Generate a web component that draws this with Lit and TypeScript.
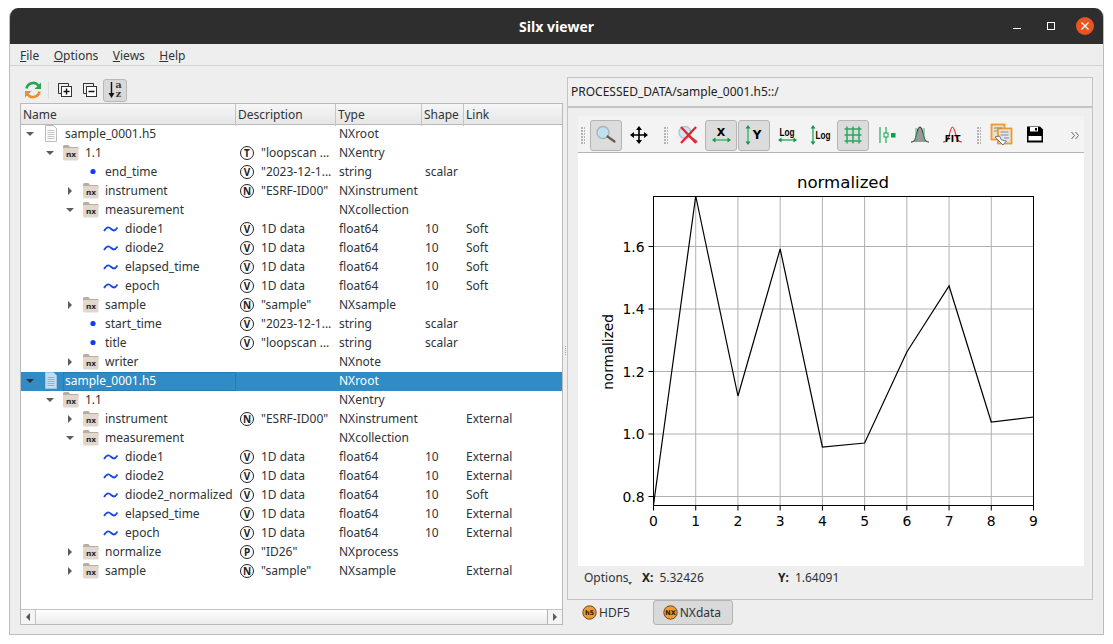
import { LitElement, html, svg, css } from 'lit';
import { customElement } from 'lit/decorators.js';
import { classMap } from 'lit/directives/class-map.js';

type Row = {
  d: number;
  kind: 'file' | 'nx' | 'dot' | 'wave';
  open?: boolean;
  name: string;
  badge?: string;
  desc?: string;
  type?: string;
  shape?: string;
  link?: string;
  sel?: boolean;
};

const ROWS: Row[] = [
  { d: 0, kind: 'file', open: true, name: 'sample_0001.h5', type: 'NXroot' },
  { d: 1, kind: 'nx', open: true, name: '1.1', badge: 'T', desc: '"loopscan ...', type: 'NXentry' },
  { d: 2, kind: 'dot', name: 'end_time', badge: 'V', desc: '"2023-12-1...', type: 'string', shape: 'scalar' },
  { d: 2, kind: 'nx', open: false, name: 'instrument', badge: 'N', desc: '"ESRF-ID00"', type: 'NXinstrument' },
  { d: 2, kind: 'nx', open: true, name: 'measurement', type: 'NXcollection' },
  { d: 3, kind: 'wave', name: 'diode1', badge: 'V', desc: '1D data', type: 'float64', shape: '10', link: 'Soft' },
  { d: 3, kind: 'wave', name: 'diode2', badge: 'V', desc: '1D data', type: 'float64', shape: '10', link: 'Soft' },
  { d: 3, kind: 'wave', name: 'elapsed_time', badge: 'V', desc: '1D data', type: 'float64', shape: '10', link: 'Soft' },
  { d: 3, kind: 'wave', name: 'epoch', badge: 'V', desc: '1D data', type: 'float64', shape: '10', link: 'Soft' },
  { d: 2, kind: 'nx', open: false, name: 'sample', badge: 'N', desc: '"sample"', type: 'NXsample' },
  { d: 2, kind: 'dot', name: 'start_time', badge: 'V', desc: '"2023-12-1...', type: 'string', shape: 'scalar' },
  { d: 2, kind: 'dot', name: 'title', badge: 'V', desc: '"loopscan ...', type: 'string', shape: 'scalar' },
  { d: 2, kind: 'nx', open: false, name: 'writer', type: 'NXnote' },
  { d: 0, kind: 'file', open: true, name: 'sample_0001.h5', type: 'NXroot', sel: true },
  { d: 1, kind: 'nx', open: true, name: '1.1', type: 'NXentry' },
  { d: 2, kind: 'nx', open: false, name: 'instrument', badge: 'N', desc: '"ESRF-ID00"', type: 'NXinstrument', link: 'External' },
  { d: 2, kind: 'nx', open: true, name: 'measurement', type: 'NXcollection' },
  { d: 3, kind: 'wave', name: 'diode1', badge: 'V', desc: '1D data', type: 'float64', shape: '10', link: 'External' },
  { d: 3, kind: 'wave', name: 'diode2', badge: 'V', desc: '1D data', type: 'float64', shape: '10', link: 'External' },
  { d: 3, kind: 'wave', name: 'diode2_normalized', badge: 'V', desc: '1D data', type: 'float64', shape: '10', link: 'Soft' },
  { d: 3, kind: 'wave', name: 'elapsed_time', badge: 'V', desc: '1D data', type: 'float64', shape: '10', link: 'External' },
  { d: 3, kind: 'wave', name: 'epoch', badge: 'V', desc: '1D data', type: 'float64', shape: '10', link: 'External' },
  { d: 2, kind: 'nx', open: false, name: 'normalize', badge: 'P', desc: '"ID26"', type: 'NXprocess' },
  { d: 2, kind: 'nx', open: false, name: 'sample', badge: 'N', desc: '"sample"', type: 'NXsample', link: 'External' },
];

const fileIcon = (sel: boolean) => html`<svg width="16" height="17" viewBox="0 0 16 17">
  <path d="M2.500 .5h8l3 3v13h-11z" fill=${sel ? '#c4dcec' : '#fbfbfb'} stroke=${sel ? '#9cc4de' : '#bdbdbd'} />
  <path d="M4.500 5.500h7M4.500 7.500h7M4.500 9.500h7M4.500 11.500h7M4.500 13.500h7" stroke=${sel ? '#8ab6d4' : '#c6c6c6'} />
</svg>`;

const nxIcon = html`<svg width="16" height="17" viewBox="0 0 16 17">
  <path d="M0 2.500q0-1.500 1.500-1.500h4l1.500 2h7.500q1 0 1 1v2h-15.500z" fill="#b9ada1" />
  <path d="M0 4h15.500v11q0 1.500-1.500 1.500h-12.500q-1.500 0-1.500-1.500z" fill="#e1d7cd" />
  <text x="8" y="13" text-anchor="middle" font-family="'DejaVu Sans',sans-serif" font-weight="700" font-size="7.500" fill="#2a2a2a">nx</text>
</svg>`;

const dotIcon = html`<svg width="16" height="17" viewBox="0 0 16 17"><circle cx="10" cy="8.500" r="2.600" fill="#0f3cf0" /></svg>`;

const waveIcon = html`<svg width="16" height="17" viewBox="0 0 16 17">
  <path d="M1 11c2-3 3.500-4 5-3.500s3 3 5 3c1.500 0 2.500-1.500 3.500-3" fill="none" stroke="#1a48e0" stroke-width="1.800" />
</svg>`;

const grnArrowH = svg`<path d="M5 17h15" stroke="#6cc08a" stroke-width="2" /><path d="M3 17l3.500-2.500v5zM22 17l-3.500-2.500v5z" fill="#0a9a4a" />`;
const grnArrowV = (x: number) => svg`<path d="M${x} 4v15" stroke="#6cc08a" stroke-width="2" /><path d="M${x} 2l-2.500 3.500h5zM${x} 22l-2.500-3.500h5z" fill="#0a9a4a" />`;
const lens = svg`<circle cx="9" cy="9.500" r="6" fill="#bfe2f3" stroke="#a9b4bb" stroke-width="1.400" /><path d="M13.500 13.500l7 5" stroke="#6b5a50" stroke-width="2.200" stroke-linecap="round" />`;
const ic = (body: unknown) => html`<svg width="24" height="24" viewBox="0 0 24 24">${body}</svg>`;
const boldText = (x: number, y: number, t: string, size: number) =>
  svg`<text x=${x} y=${y} text-anchor="middle" font-family="'DejaVu Sans',sans-serif" font-weight="700" font-size=${size} fill="#000">${t}</text>`;
// the icon's "Log" is a condensed face, squeezed here so it stays inside its button
const logText = (x: number, y: number) =>
  svg`<text transform="translate(${x} ${y}) scale(.78 1)" text-anchor="middle" font-family="'Liberation Sans',sans-serif" font-weight="700" font-size="10.500" fill="#000">Log</text>`;

const ICONS = {
  zoom: ic(lens),
  pan: ic(svg`<path d="M12 5v14M5 12h14" stroke="#000" stroke-width="1.600" /><path d="M12 3l-3 4h6zM12 21l-3-4h6zM3 12l4-3v6zM21 12l-4-3v6z" fill="#000" />`),
  reset: ic(svg`<g opacity=".75">${lens}</g><path d="M5 4l15 16M20 4L5 20" stroke="#e8212e" stroke-width="2.200" />`),
  x: ic(svg`${boldText(12, 13, 'X', 11)}${grnArrowH}`),
  y: ic(svg`${grnArrowV(6)}${boldText(15, 16, 'Y', 12)}`),
  logx: ic(svg`${logText(12, 13)}${grnArrowH}`),
  logy: ic(svg`${grnArrowV(5)}${logText(15, 16)}`),
  grid: ic(svg`<path d="M6 3.500v17M12 3.500v17M18 3.500v17M3.500 6h17M3.500 12h17M3.500 18h17" stroke="#2aa860" stroke-width="1.500" />`),
  style: ic(svg`<path d="M6 4v16M12 4v16" stroke="#4cba7a" stroke-width="1.500" /><rect x="10" y="10" width="4" height="4" fill="#fff" stroke="#12a050" /><rect x="17" y="10" width="4.500" height="4.500" fill="#0fa04c" />`),
  gauss: ic(svg`<path d="M4 19c3 0 4-2 5-6s2-9 4-9 3 6 4 10 3 5 5 5z" fill="#999" /><path d="M4 19c3 0 4-2 5-6s2-9 4-9 3 6 4 10 3 5 5 5" fill="none" stroke="#222" /><path d="M9 5v14M17 5v14" stroke="#3fb573" />`),
  fit: ic(svg`<path d="M3 19c3 0 5-2 6-6s2-9 3.500-9 3 6 4 10 3 5 5.500 5" fill="none" stroke="#e8323c" stroke-width="1.200" />${boldText(12.500, 19, 'FIT', 9)}`),
  copy: ic(svg`<rect x="2.500" y="1.500" width="13" height="15" fill="#eadfc9" stroke="#f09a28" stroke-width="1.800" /><rect x="9" y="5.500" width="13.500" height="15" fill="#e5e5e5" stroke="#f09a28" stroke-width="1.800" /><path d="M5 5h8M5 8h3M11.500 9h8M11.500 12h8M15 15h5" stroke="#8a8a8a" stroke-width="1.200" /><path d="M6 14l8 8 3.500-4-5-1-2-4z" fill="#fff" stroke="#555" stroke-width=".8" />`),
  save: ic(svg`<path d="M5 3.500h13l3 3v13H5z" fill="#000" /><rect x="8" y="4" width="8" height="4.500" fill="#fff" /><rect x="13" y="5" width="2" height="2.500" fill="#000" /><rect x="6.500" y="13" width="13" height="4.500" fill="#fff" />`),
};

const refreshIcon = html`<svg width="18" height="18" viewBox="0 0 18 18">
  <path d="M2.500 7.500A6.800 6.800 0 0 1 14.500 4.500" fill="none" stroke="#27a74b" stroke-width="2.600" />
  <path d="M17 1.500v6.500h-6.500z" fill="#27a74b" />
  <path d="M15.500 10.500A6.800 6.800 0 0 1 3.500 13.500" fill="none" stroke="#f28c28" stroke-width="2.600" />
  <path d="M1 16.500V10h6.500z" fill="#f28c28" />
</svg>`;
const expandIcon = html`<svg width="14" height="14" viewBox="0 0 14 14">
  <path d="M3 .5H.5v10H3M.5 .5h10V3" fill="none" stroke="#333" />
  <rect x="3.500" y="3.500" width="10" height="10" fill="#fff" stroke="#333" />
  <path d="M5.500 8.500h6M8.500 5.500v6" stroke="#111" stroke-width="1.400" />
</svg>`;
const collapseIcon = html`<svg width="14" height="14" viewBox="0 0 14 14">
  <path d="M3 .5H.5v10H3M.5 .5h10V3" fill="none" stroke="#333" />
  <rect x="3.500" y="3.500" width="10" height="10" fill="#fff" stroke="#333" />
  <path d="M5.500 8.500h6" stroke="#111" stroke-width="1.400" />
</svg>`;
const sortIcon = html`<svg width="18" height="20" viewBox="0 0 18 20">
  <path d="M5.500 2v13" stroke="#111" stroke-width="1.400" /><path d="M5.500 18l-3-5h6z" fill="#111" />
  <text x="12.500" y="8" text-anchor="middle" font-family="'DejaVu Serif',serif" font-weight="700" font-size="9.500" fill="#333">a</text>
  <text x="12.500" y="17" text-anchor="middle" font-family="'DejaVu Serif',serif" font-weight="700" font-size="9.500" fill="#333">z</text>
</svg>`;

const orangeBall = (t: string) => html`<svg width="15" height="15" viewBox="0 0 15 15">
  <circle cx="7.500" cy="7.500" r="6.700" fill="#f59a2b" stroke="#6b4a22" />
  <text x="7.500" y="10" text-anchor="middle" font-family="'DejaVu Sans',sans-serif" font-weight="700" font-size="6.500" fill="#241a0c">${t}</text>
</svg>`;

// plot mapping, in window pixels (viewBox of the svg is the same)
const AX = { l: 653.5, r: 1033.5, t: 196.5, b: 505.5 };
const xp = (v: number) => AX.l + (v * (AX.r - AX.l)) / 9;
const yp = (v: number) => 496.5 - ((v - 0.8) * 250) / 0.8;
const LINE = [505, 196, 396, 249, 447, 443, 352, 286, 422, 417];
const XT = [0, 1, 2, 3, 4, 5, 6, 7, 8, 9];
const YT = [0.8, 1.0, 1.2, 1.4, 1.6];

@customElement('app-root')
export class AppRoot extends LitElement {
  static styles = css`
    :host {
      display: block;
      padding: 8px 9px;
      background: #fff;
      font-family: 'Noto Sans', sans-serif;
      font-size: 12px;
      color: #2e3436;
    }
    .win {
      width: 1095px;
      height: 627px;
      box-sizing: border-box;
      border: 1px solid #bcbcbc;
      border-top: 0;
      border-radius: 9px 9px 0 0;
      background: #eeeeee;
      display: flex;
      flex-direction: column;
      overflow: hidden;
    }
    .title {
      height: 36px;
      flex: none;
      margin: 0 -1px;
      background: #2f2e2e;
      color: #fff;
      font-family: 'Open Sans', sans-serif;
      font-weight: 700;
      font-size: 14px;
      display: flex;
      align-items: center;
      justify-content: center;
      position: relative;
    }
    .wm {
      position: absolute;
      right: 10px;
      top: 0;
      height: 36px;
      display: flex;
      align-items: center;
      gap: 16px;
    }
    .menu {
      height: 22px;
      flex: none;
      box-sizing: border-box;
      border-bottom: 1px solid #d2d2d2;
      display: flex;
      align-items: center;
      gap: 14.500px;
      padding: 1px 0 0 10px;
    }
    .main {
      flex: 1;
      display: flex;
      padding: 11px 10px 9px 10px;
      min-height: 0;
    }
    .left {
      width: 543px;
      flex: none;
      display: flex;
      flex-direction: column;
    }
    .tools {
      height: 26px;
      flex: none;
      display: flex;
      align-items: center;
      box-sizing: border-box;
    }
    .tbtn {
      width: 24px;
      height: 23px;
      flex: none;
      box-sizing: border-box;
      display: flex;
      align-items: center;
      justify-content: center;
      border: 1px solid transparent;
      border-radius: 3px;
      margin-right: 1px;
    }
    .tbtn.first {
      padding-left: 2px;
    }
    .tbtn.on {
      background: #d9d9d9;
      border-color: #b8b8b8;
    }
    .sep {
      width: 1px;
      height: 18px;
      background: #dcdcdc;
      margin: 0 4px 0 3px;
    }
    .tree {
      flex: 1;
      border: 1px solid #b9b9b9;
      background: #fff;
      display: flex;
      flex-direction: column;
      min-height: 0;
    }
    .hdr,
    .row {
      display: grid;
      grid-template-columns: 215px 100px 86px 42px 1fr;
    }
    .hdr {
      height: 21px;
      flex: none;
      box-sizing: border-box;
      border-bottom: 1px solid #b9b9b9;
      background: linear-gradient(#f6f6f6, #e6e6e6);
    }
    .hdr > div {
      padding-left: 2px;
      line-height: 22px;
      box-sizing: border-box;
      border-right: 1px solid #c4c4c4;
    }
    .hdr > div:last-child {
      border-right: 0;
    }
    .rows {
      flex: 1;
      min-height: 0;
      overflow: hidden;
    }
    .row {
      height: 19px;
      line-height: 17px;
    }
    .row.sel {
      background: #308cc6;
      color: #fff;
    }
    .namec {
      height: 19px;
      box-sizing: border-box;
      padding-bottom: 2px;
      display: flex;
      align-items: center;
      min-width: 0;
    }
    .arrow {
      width: 18px;
      flex: none;
      display: flex;
      justify-content: center;
      align-items: center;
    }
    .down {
      width: 0;
      height: 0;
      border-left: 4px solid transparent;
      border-right: 4px solid transparent;
      border-top: 4px solid #5c5c5c;
    }
    .right {
      width: 0;
      height: 0;
      border-top: 4px solid transparent;
      border-bottom: 4px solid transparent;
      border-left: 4px solid #5c5c5c;
    }
    .row.sel .down {
      border-top-color: #24323c;
    }
    .ico {
      width: 16px;
      height: 17px;
      flex: none;
      margin-left: 4px;
    }
    .ico svg {
      display: block;
    }
    .lab {
      flex: 1;
      align-self: flex-start;
      padding-left: 2px;
      margin-left: 4px;
      height: 19px;
      white-space: nowrap;
    }
    .row.sel .lab {
      outline: 1px solid #2a7bae;
      outline-offset: -1px;
    }
    .descc {
      height: 19px;
      box-sizing: border-box;
      padding: 0 0 2px 4px;
      display: flex;
      align-items: center;
      gap: 7px;
      white-space: nowrap;
    }
    .badge {
      width: 12px;
      height: 12px;
      border: 1px solid #222;
      border-radius: 50%;
      display: flex;
      align-items: center;
      justify-content: center;
      font-size: 10px;
      font-weight: 700;
      color: #222;
      line-height: 1;
    }
    .typec {
      padding-left: 3px;
    }
    .linkc {
      padding-left: 2px;
    }
    .hbar {
      height: 14px;
      flex: none;
      border-top: 1px solid #c4c4c4;
      display: flex;
      background: linear-gradient(#fff, #ececec);
    }
    .sbtn {
      width: 14px;
      flex: none;
      display: flex;
      align-items: center;
      justify-content: center;
      background: #f4f4f4;
    }
    .sbtn.l {
      border-right: 1px solid #c4c4c4;
    }
    .sbtn.r {
      border-left: 1px solid #b4b4b4;
    }
    .track {
      flex: 1;
    }
    .tri-l {
      width: 0;
      height: 0;
      border-top: 4px solid transparent;
      border-bottom: 4px solid transparent;
      border-right: 4px solid #555;
    }
    .splitter {
      width: 4px;
      flex: none;
      display: flex;
      align-items: center;
      justify-content: center;
    }
    .dots {
      width: 1px;
      height: 10px;
      background: repeating-linear-gradient(#aaa 0 1px, transparent 1px 2px);
    }
    .rightc {
      width: 526px;
      flex: none;
      display: flex;
      flex-direction: column;
    }
    .path {
      height: 29px;
      flex: none;
      box-sizing: border-box;
      border: 1px solid #c4c4c4;
      border-bottom: 0;
      padding-left: 3px;
      line-height: 27px;
      background: #f0f0f0;
      color: #222;
    }
    .panel {
      height: 494px;
      flex: none;
      box-sizing: border-box;
      border: 1px solid #c4c4c4;
      border-top-width: 2px;
      padding: 8px 8px 0 10px;
      display: flex;
      flex-direction: column;
    }
    .plotbar {
      height: 37px;
      flex: none;
      box-sizing: border-box;
      border-bottom: 1px solid #b4b4b4;
      background: #f3f3f3;
      display: flex;
      align-items: center;
      gap: 1px;
      padding: 3px 0 0 3px;
    }
    .pb {
      width: 32px;
      height: 31px;
      flex: none;
      box-sizing: border-box;
      border: 1px solid transparent;
      border-radius: 3px;
      display: flex;
      align-items: flex-start;
      justify-content: center;
      padding-top: 2px;
    }
    .pb.on {
      background: #dcdcdc;
      border-color: #b4b4b4;
    }
    .grip {
      width: 4px;
      height: 18px;
      flex: none;
      margin: 0 3px 0 8px;
      background-image: radial-gradient(circle at 1px 1px, #b4b4b4 .8px, transparent .9px);
      background-size: 3px 3px;
    }
    .grip.lead {
      margin: 0 4px 0 0;
    }
    .more {
      margin-left: auto;
      margin-right: 4px;
      width: 9px;
      height: 9px;
      display: flex;
    }
    .plot {
      height: 413px;
      flex: none;
      background: #fff;
    }
    .plot svg {
      display: block;
    }
    .status {
      flex: 1;
      display: flex;
      align-items: center;
      padding: 0 0 10px 6px;
    }
    .opt {
      width: 58px;
      position: relative;
    }
    .opt i {
      position: absolute;
      left: 44px;
      top: 13px;
      width: 0;
      height: 0;
      border-left: 2.500px solid transparent;
      border-right: 2.500px solid transparent;
      border-top: 3px solid #555;
    }
    .coord {
      display: flex;
      gap: 6px;
      width: 136px;
    }
    .coord b {
      color: #222;
    }
    .tabs {
      flex: 1;
      display: flex;
      align-items: flex-start;
      padding: 0 0 0 6px;
    }
    .tab {
      height: 25px;
      box-sizing: border-box;
      display: flex;
      align-items: center;
      gap: 2px;
      padding: 0 8px;
      border: 1px solid transparent;
      border-radius: 3px;
    }
    .tab.on {
      background: #d9d9d9;
      border-color: #b4b4b4;
      margin-left: 14px;
      padding: 0 11px 0 9px;
    }
  `;

  renderRow(r: Row) {
    const icon = r.kind === 'file' ? fileIcon(!!r.sel) : r.kind === 'nx' ? nxIcon : r.kind === 'dot' ? dotIcon : waveIcon;
    return html`<div class=${classMap({ row: true, sel: !!r.sel })}>
      <div class="namec" style="padding-left:${r.d * 20}px">
        <span class="arrow">${r.open === undefined ? '' : html`<span class=${r.open ? 'down' : 'right'}></span>`}</span>
        <span class="ico">${icon}</span>
        <span class="lab">${r.name}</span>
      </div>
      <div class="descc">${r.badge ? html`<span class="badge">${r.badge}</span>` : ''}<span>${r.desc ?? ''}</span></div>
      <div class="typec">${r.type ?? ''}</div>
      <div class="typec">${r.shape ?? ''}</div>
      <div class="linkc">${r.link ?? ''}</div>
    </div>`;
  }

  renderPlot() {
    const pts = LINE.map((y, i) => `${xp(i)},${y}`).join(' ');
    const sans = "'DejaVu Sans',sans-serif";
    return html`<svg width="506" height="413" viewBox="578 153 506 413">
      ${XT.slice(1, -1).map((v) => svg`<line x1=${xp(v)} x2=${xp(v)} y1=${AX.t} y2=${AX.b} stroke="#b0b0b0" />`)}
      ${YT.map((v) => svg`<line x1=${AX.l} x2=${AX.r} y1=${yp(v)} y2=${yp(v)} stroke="#b0b0b0" />`)}
      <polyline points=${pts} fill="none" stroke="#000" stroke-width="1.200" />
      <rect x=${AX.l} y=${AX.t} width=${AX.r - AX.l} height=${AX.b - AX.t} fill="none" stroke="#000" />
      ${XT.map((v) => svg`<line x1=${xp(v)} x2=${xp(v)} y1=${AX.b} y2=${AX.b + 5} stroke="#000" />
        <text x=${xp(v)} y=${AX.b + 20} text-anchor="middle" font-family=${sans} font-size="13.900" fill="#000">${v}</text>`)}
      ${YT.map((v) => svg`<line x1=${AX.l - 5} x2=${AX.l} y1=${yp(v)} y2=${yp(v)} stroke="#000" />
        <text x=${AX.l - 9} y=${yp(v) + 5} text-anchor="end" font-family=${sans} font-size="13.900" fill="#000">${v.toFixed(1)}</text>`)}
      <text x="843" y="188" text-anchor="middle" font-family=${sans} font-size="16.600" fill="#000">normalized</text>
      <text transform="translate(613 352) rotate(-90)" text-anchor="middle" font-family=${sans} font-size="13.600" fill="#000">normalized</text>
    </svg>`;
  }

  render() {
    return html`<div class="win">
      <div class="title">
        Silx viewer
        <div class="wm">
          <svg width="10" height="10" viewBox="0 0 10 10"><path d="M1 7.500h8" stroke="#fff" stroke-width="1" /></svg>
          <svg width="10" height="10" viewBox="0 0 10 10" style="margin-left:8px"><rect x="1.500" y="1.500" width="7" height="7" fill="none" stroke="#fff" /></svg>
          <svg width="18" height="18" viewBox="0 0 18 18" style="margin-left:4px">
            <circle cx="9" cy="9" r="9" fill="#e95420" /><path d="M5.500 5.500l7 7M12.500 5.500l-7 7" stroke="#fff" stroke-width="1.300" />
          </svg>
        </div>
      </div>
      <div class="menu">
        <span><u>F</u>ile</span><span><u>O</u>ptions</span><span><u>V</u>iews</span><span><u>H</u>elp</span>
      </div>
      <div class="main">
        <div class="left">
          <div class="tools">
            <div class="tbtn first">${refreshIcon}</div>
            <div class="sep"></div>
            <div class="tbtn">${expandIcon}</div>
            <div class="tbtn">${collapseIcon}</div>
            <div class="tbtn on">${sortIcon}</div>
          </div>
          <div class="tree">
            <div class="hdr"><div>Name</div><div>Description</div><div>Type</div><div>Shape</div><div>Link</div></div>
            <div class="rows">${ROWS.map((r) => this.renderRow(r))}</div>
            <div class="hbar">
              <div class="sbtn l"><span class="tri-l"></span></div>
              <div class="track"></div>
              <div class="sbtn r"><span class="right"></span></div>
            </div>
          </div>
        </div>
        <div class="splitter"><div class="dots"></div></div>
        <div class="rightc">
          <div class="path">PROCESSED_DATA/sample_0001.h5::/</div>
          <div class="panel">
            <div class="plotbar">
              <div class="grip lead"></div>
              <div class="pb on">${ICONS.zoom}</div>
              <div class="pb">${ICONS.pan}</div>
              <div class="grip"></div>
              <div class="pb">${ICONS.reset}</div>
              <div class="pb on">${ICONS.x}</div>
              <div class="pb on">${ICONS.y}</div>
              <div class="pb">${ICONS.logx}</div>
              <div class="pb">${ICONS.logy}</div>
              <div class="pb on">${ICONS.grid}</div>
              <div class="pb">${ICONS.style}</div>
              <div class="pb">${ICONS.gauss}</div>
              <div class="pb">${ICONS.fit}</div>
              <div class="grip"></div>
              <div class="pb">${ICONS.copy}</div>
              <div class="pb">${ICONS.save}</div>
              <div class="more">
                <svg width="9" height="9" viewBox="0 0 9 9"><path d="M.5 1l3 3.500-3 3.500M4.500 1l3 3.500-3 3.500" fill="none" stroke="#666" /></svg>
              </div>
            </div>
            <div class="plot">${this.renderPlot()}</div>
            <div class="status">
              <div class="opt">Options<i></i></div>
              <div class="coord"><b>X:</b><span>5.32426</span></div>
              <div class="coord"><b>Y:</b><span>1.64091</span></div>
            </div>
          </div>
          <div class="tabs">
            <div class="tab">${orangeBall('h5')}<span>HDF5</span></div>
            <div class="tab on">${orangeBall('NX')}<span>NXdata</span></div>
          </div>
        </div>
      </div>
    </div>`;
  }
}
